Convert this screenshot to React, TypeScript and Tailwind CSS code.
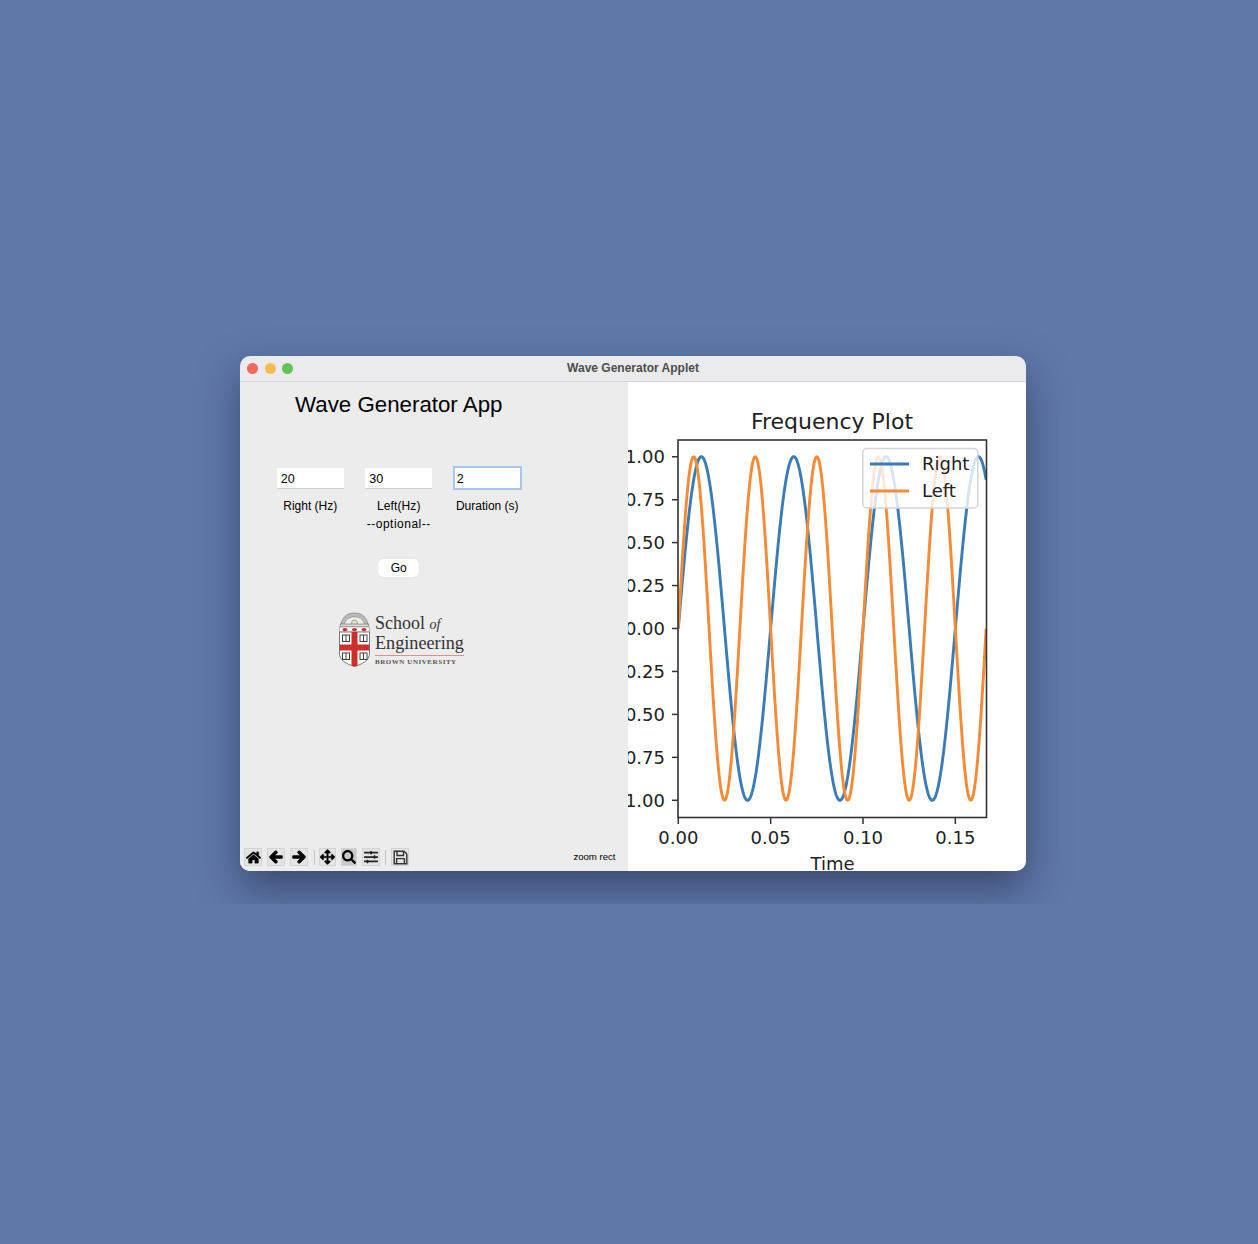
import { FaHome, FaArrowLeft, FaArrowRight, FaArrowsAlt, FaSearch, FaSlidersH } from 'react-icons/fa';

const X0 = 50.3;
const X_SCALE = 1847;
const Y_MID = 247.5;
const Y_AMP = 171.8;

const Y_TICKS = ['1.00', '0.75', '0.50', '0.25', '0.00', '\u22120.25', '\u22120.50', '\u22120.75', '\u22121.00'];
const X_TICKS = ['0.00', '0.05', '0.10', '0.15'];

function wave(freq: number) {
  const pts: string[] = [];
  for (let i = 0; i <= 700; i++) {
    const t = (i / 700) * (1 / 6);
    const x = X0 + t * X_SCALE;
    const y = Y_MID - Y_AMP * Math.sin(2 * Math.PI * freq * t);
    pts.push(`${x.toFixed(2)},${y.toFixed(2)}`);
  }
  return pts.join(' ');
}

function FrequencyPlot() {
  return (
    <svg width="398" height="489" viewBox="0 1 398 489" className="block" fontFamily="'DejaVu Sans', sans-serif" fill="#222">
      <defs>
        <clipPath id="axes">
          <rect x="50" y="59" width="308.5" height="377.5" />
        </clipPath>
      </defs>
      <text x="204" y="47.8" fontSize="22" textAnchor="middle">Frequency Plot</text>
      <g clipPath="url(#axes)" fill="none" strokeWidth="2.9">
        <polyline points={wave(20)} stroke="#3a7cb5" />
        <polyline points={wave(30)} stroke="#f68b36" />
      </g>
      <rect x="50" y="59" width="308.5" height="377.5" fill="none" stroke="#333" strokeWidth="1.6" />
      {Y_TICKS.map((label, i) => {
        const y = 75.7 + i * 42.95;
        return (
          <g key={label}>
            <line x1="44" x2="50" y1={y} y2={y} stroke="#333" strokeWidth="1.5" />
            <text x="37" y={y + 6.6} fontSize="18" textAnchor="end">{label}</text>
          </g>
        );
      })}
      {X_TICKS.map((label, i) => {
        const x = X0 + i * 0.05 * X_SCALE;
        return (
          <g key={label}>
            <line x1={x} x2={x} y1="436.5" y2="443" stroke="#333" strokeWidth="1.5" />
            <text x={x} y="463" fontSize="18" textAnchor="middle">{label}</text>
          </g>
        );
      })}
      <text x="204.5" y="488.5" fontSize="18" textAnchor="middle">Time</text>
      <rect x="234.8" y="67.5" width="115" height="59.5" rx="4" fill="#fff" fillOpacity="0.8" stroke="#d4d4d4" strokeWidth="1.5" />
      <line x1="242" x2="281" y1="83" y2="83" stroke="#3a7cb5" strokeWidth="2.9" />
      <line x1="242" x2="281" y1="110" y2="110" stroke="#f68b36" strokeWidth="2.9" />
      <text x="294" y="89" fontSize="18">Right</text>
      <text x="294" y="116" fontSize="18">Left</text>
    </svg>
  );
}

function BrownShield() {
  return (
    <svg width="33" height="55" viewBox="0 0 33 55" className="shrink-0">
      {/* crest */}
      <path d="M3 12 C5 3 11 1 16.5 1 C22 1 28 3 30 12 L27 13 C25 7 21 5 16.5 5 C12 5 8 7 6 13 Z" fill="#b9b9b9" stroke="#777" strokeWidth="0.6" />
      <path d="M6 13 C8 7 12 5 16.5 5 C21 5 25 7 27 13 Z" fill="#f1efe6" stroke="#999" strokeWidth="0.5" />
      <circle cx="16.5" cy="11" r="3" fill="#e8e2c8" stroke="#777" strokeWidth="0.6" />
      <path d="M2 12 H31 L30 15 H3 Z" fill="#d8d8d8" stroke="#666" strokeWidth="0.6" />
      <rect x="1.5" y="15" width="30" height="5" fill="#fff" stroke="#777" strokeWidth="0.5" />
      <ellipse cx="7" cy="17.6" rx="2.6" ry="1.6" fill="#c8322c" />
      <ellipse cx="16.5" cy="17.6" rx="2.6" ry="1.6" fill="#c8322c" />
      <ellipse cx="26" cy="17.6" rx="2.6" ry="1.6" fill="#c8322c" />
      {/* shield */}
      <path d="M1.5 20 H31.5 V41 C31.5 49 24 52 16.5 54.5 C9 52 1.5 49 1.5 41 Z" fill="#fff" stroke="#6b6b6b" strokeWidth="0.9" />
      <path d="M13.5 20 H19.5 V54 L16.5 54.5 L13.5 53.8 Z" fill="#cf2f2b" />
      <rect x="1.9" y="32.5" width="29.2" height="6" fill="#cf2f2b" />
      {[
        [4.5, 23],
        [22, 23],
        [4.5, 41],
        [22, 41],
      ].map(([x, y]) => (
        <g key={`${x}-${y}`} fill="none" stroke="#3f3f3f" strokeWidth="1">
          <rect x={x} y={y} width="7" height="6.5" />
          <line x1={x + 3.5} x2={x + 3.5} y1={y} y2={y + 6.5} />
        </g>
      ))}
    </svg>
  );
}

function SaveIcon() {
  return (
    <svg width="15" height="15" viewBox="0 0 15 15" fill="none" stroke="#333" strokeWidth="1.4">
      <path d="M1.2 1.2 H11 L13.8 4 V13.8 H1.2 Z" />
      <path d="M4 1.5 V5.5 H10.5 V1.5" />
      <path d="M3.6 13.5 V8.6 H11.4 V13.5" />
    </svg>
  );
}

function ToolButton({ children, active, className }: { children: React.ReactNode; active?: boolean; className: string }) {
  return (
    <div
      className={`flex h-[18px] items-center justify-center border border-[#d4d4d4] text-black ${active ? 'bg-[#c9c9c9]' : 'bg-[#e4e4e4]'} ${className}`}
    >
      {children}
    </div>
  );
}

export default function App() {
  return (
    <div className="min-h-[1244px] bg-[#6078a8]">
      <div className="h-[904px] overflow-hidden pl-[240px] pt-[356px]">
        <div className="h-[515px] w-[786px] overflow-hidden rounded-[10px] shadow-[0_18px_40px_rgba(20,30,60,0.5)]">
          {/* Title bar */}
          <div className="relative flex h-[26px] items-center justify-center border-b border-[#d6d6d6] bg-[#ebebed] pb-[2px]">
            <div className="absolute left-[7px] top-[6.5px] flex gap-[6.5px]">
              <span className="h-[11px] w-[11px] rounded-full bg-[#ee6a5f]" />
              <span className="h-[11px] w-[11px] rounded-full bg-[#f5bd4f]" />
              <span className="h-[11px] w-[11px] rounded-full bg-[#61c454]" />
            </div>
            <span className="font-['Liberation_Sans',sans-serif] text-[12px] font-bold text-[#4d4d4d]">Wave Generator Applet</span>
          </div>

          <div className="flex h-[489px] bg-white">
            {/* Left panel */}
            <div className="flex w-[388px] shrink-0 flex-col bg-[#ececec] font-['Liberation_Sans',sans-serif] text-black">
              <div className="ml-[26px] w-[265.5px]">
                <h1 className="flex h-[46px] items-center justify-center text-[22.3px] font-normal leading-none">Wave Generator App</h1>
                <div className="mt-[40px] grid grid-cols-[88.5px_88.5px_88.5px] text-center text-[12px] leading-[14px]">
                  <div className="flex flex-col items-center">
                    <input readOnly value="20" className="h-[20px] w-[67px] bg-white pl-1 pt-[2px] text-[12.5px] shadow-[0_1px_0_#cfcfcf] outline-none" />
                    <span className="mt-[11px]">Right (Hz)</span>
                  </div>
                  <div className="flex flex-col items-center">
                    <input readOnly value="30" className="h-[20px] w-[67px] bg-white pl-1 pt-[2px] text-[12.5px] shadow-[0_1px_0_#cfcfcf] outline-none" />
                    <span className="mt-[11px] tracking-[0.1px]">Left(Hz)</span>
                    <span className="mt-[3.5px] tracking-[0.5px]">--optional--</span>
                  </div>
                  <div className="flex flex-col items-center">
                    <input readOnly value="2" className="h-[20px] w-[65px] bg-white pl-[2px] pt-[2px] text-[12.5px] outline-none ring-2 ring-[#a6c6f3]" />
                    <span className="mt-[11px]">Duration (s)</span>
                  </div>
                </div>
                <div className="mt-[28.5px] flex justify-center">
                  <button className="h-[18px] w-[41px] rounded-[5px] bg-white text-[12px] leading-none text-black shadow-[0_0_1px_rgba(0,0,0,0.2)]">Go</button>
                </div>
              </div>

              {/* Logo */}
              <div className="ml-[98px] mt-[35px] flex gap-[4px]">
                <BrownShield />
                <div className="font-['Liberation_Serif',serif] text-[#333]">
                  <div className="mt-[1px] h-[20px] text-[18px] leading-[20px]">
                    School <span className="text-[14px] italic">of</span>
                  </div>
                  <div className="h-[23px] border-b border-[#e58f86] text-[18.2px] leading-[20px]">Engineering</div>
                  <div className="mt-[2px] text-[7px] font-bold leading-[9px] tracking-[0.55px] text-[#555]">BROWN UNIVERSITY</div>
                </div>
              </div>

              {/* Toolbar */}
              <div className="mb-[5px] mt-auto flex items-center pl-[4px]">
                <ToolButton className="w-[18px]"><FaHome size={15} stroke="currentColor" strokeWidth={10} /></ToolButton>
                <ToolButton className="ml-[5px] w-[18px]"><FaArrowLeft size={14} stroke="currentColor" strokeWidth={45} /></ToolButton>
                <ToolButton className="ml-[5px] w-[18px]"><FaArrowRight size={14} stroke="currentColor" strokeWidth={45} /></ToolButton>
                <span className="ml-[5.5px] h-[15px] w-px bg-[#c4c4c4]" />
                <ToolButton className="ml-[4.5px] w-[17px]"><FaArrowsAlt size={16} stroke="currentColor" strokeWidth={10} /></ToolButton>
                <ToolButton active className="ml-[5px] w-[16px]"><FaSearch size={14} /></ToolButton>
                <ToolButton className="ml-[5px] w-[18px]"><FaSlidersH size={14} className="text-[#222]" /></ToolButton>
                <span className="ml-[5px] h-[15px] w-px bg-[#c4c4c4]" />
                <ToolButton className="ml-[5px] w-[18px]"><SaveIcon /></ToolButton>
                <span className="ml-auto mb-[-1px] mr-[12.5px] text-[9.6px]">zoom rect</span>
              </div>
            </div>

            <FrequencyPlot />
          </div>
        </div>
      </div>
    </div>
  );
}
